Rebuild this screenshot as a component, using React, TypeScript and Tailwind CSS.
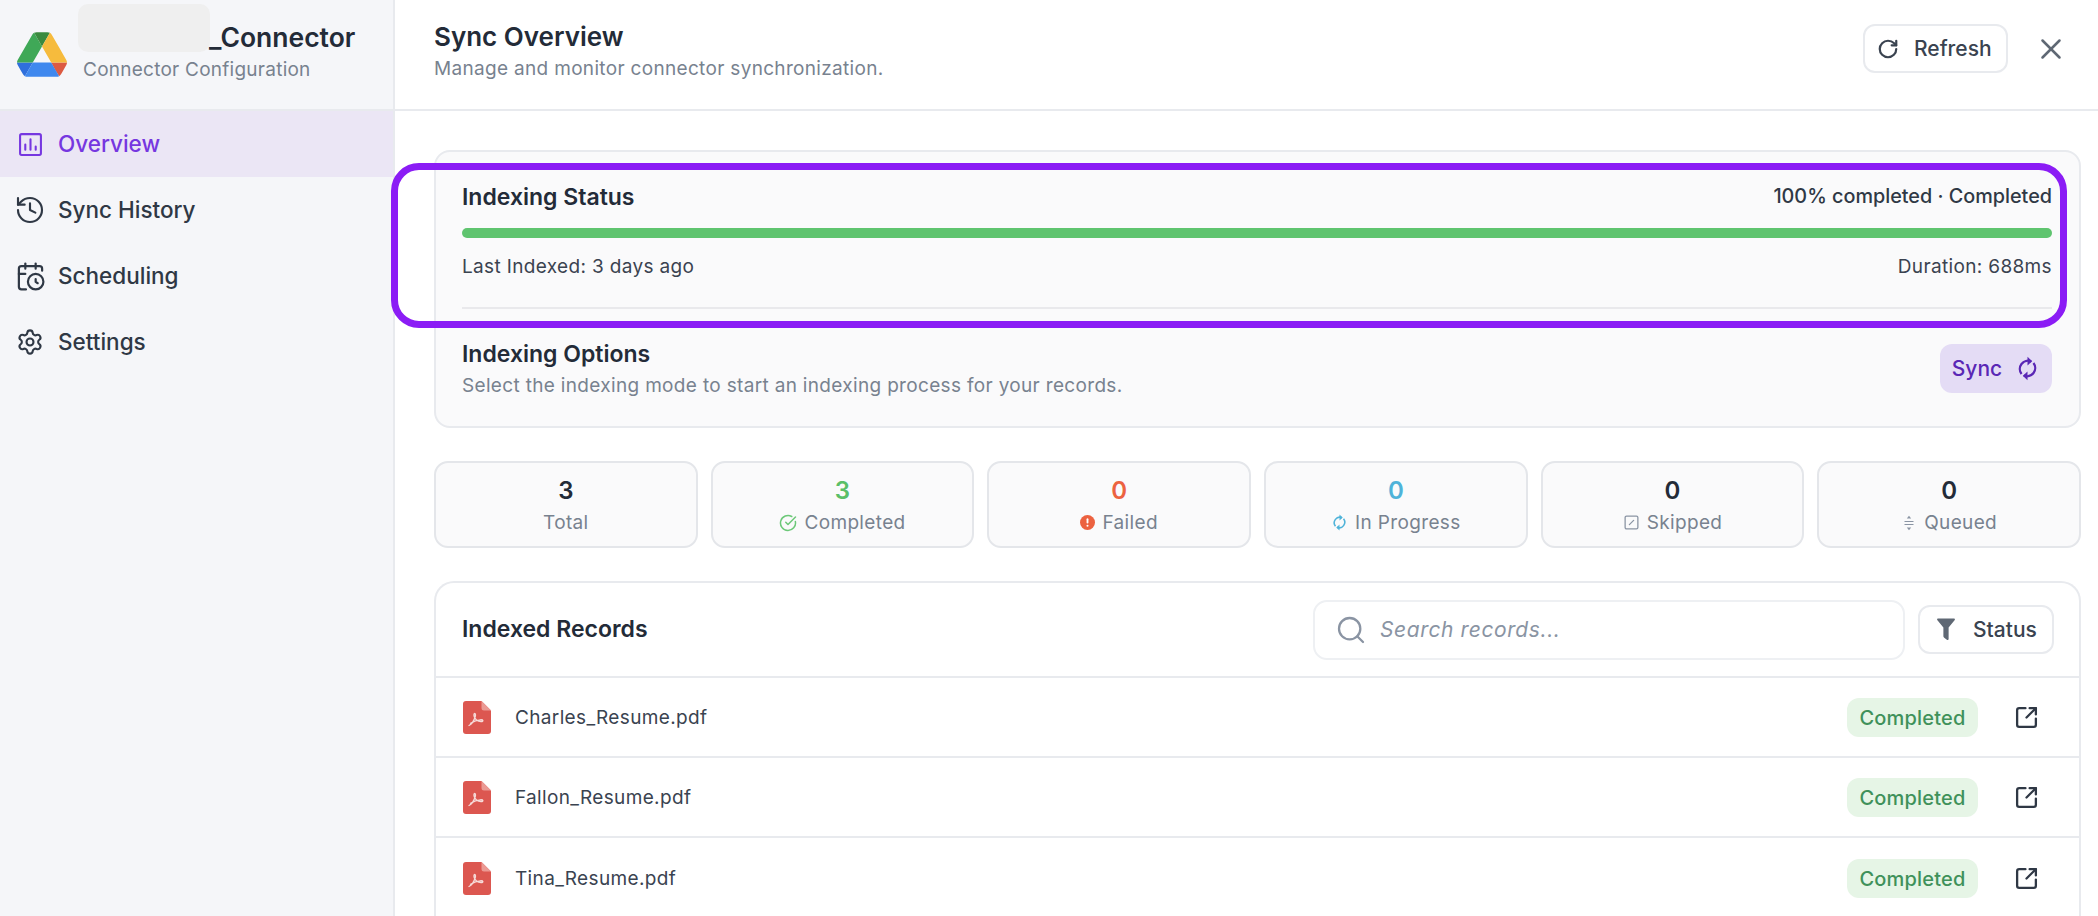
import React from 'react';
import {
  CalendarClock,
  CircleCheckBig,
  History,
  RotateCw,
  Search,
  Settings,
  SquareArrowOutUpRight,
  SquareSlash,
  X,
} from 'lucide-react';

const DriveLogo = () => (
  <svg viewBox="0 0 87.3 78" className="w-[50px] h-[45px] shrink-0">
    <path d="m6.6 66.85 3.85 6.65c.8 1.4 1.95 2.5 3.3 3.3l13.75-23.8h-27.5c0 1.55.4 3.1 1.2 4.5z" fill="#2f6fdc" />
    <path d="m43.65 25-13.75-23.8c-1.35.8-2.5 1.9-3.3 3.3l-25.4 44a9.06 9.06 0 0 0 -1.2 4.5h27.5z" fill="#3fa857" />
    <path d="m73.55 76.8c1.35-.8 2.5-1.9 3.3-3.3l1.6-2.75 7.65-13.25c.8-1.4 1.2-2.95 1.2-4.5h-27.502l5.852 11.5z" fill="#dc5a42" />
    <path d="m43.65 25 13.75-23.8c-1.35-.8-2.9-1.2-4.5-1.2h-18.5c-1.6 0-3.15.45-4.5 1.2z" fill="#3a8a3f" />
    <path d="m59.8 53h-32.3l-13.75 23.8c1.35.8 2.9 1.2 4.5 1.2h50.8c1.6 0 3.15-.45 4.5-1.2z" fill="#3f88ee" />
    <path d="m73.4 26.5-12.7-22c-.8-1.4-1.95-2.5-3.3-3.3l-13.75 23.8 16.15 28h27.45c0-1.55-.4-3.1-1.2-4.5z" fill="#f6bb3d" />
  </svg>
);

const OverviewIcon = () => (
  <svg viewBox="0 0 24 24" fill="none" stroke="currentColor" strokeWidth={2} className="w-[25px] h-[25px] shrink-0">
    <rect x="2" y="2" width="20" height="20" rx="1.5" />
    <path d="M7 12v5M12 7v10M17 14v3" strokeLinecap="round" />
  </svg>
);

const SyncIcon = ({ className }: { className: string }) => (
  <svg viewBox="0 0 24 24" fill="none" stroke="currentColor" strokeWidth={2.2} className={className}>
    <path d="M15.5 5.2A7.8 7.8 0 0 0 6.3 17.2" />
    <path d="M8.5 18.8A7.8 7.8 0 0 0 17.7 6.8" />
    <path d="M12 .8 16.5 5 12 9.2z" fill="currentColor" stroke="none" />
    <path d="M12 23.2 7.5 19 12 14.8z" fill="currentColor" stroke="none" />
  </svg>
);

const FailedIcon = () => (
  <svg viewBox="0 0 16 16" className="w-[15px] h-[15px] shrink-0">
    <circle cx="8" cy="8" r="8" fill="#ec6240" />
    <rect x="7" y="3.5" width="2" height="5.5" rx="1" fill="#fff" />
    <circle cx="8" cy="11.5" r="1.1" fill="#fff" />
  </svg>
);

const QueuedIcon = () => (
  <svg viewBox="0 0 16 16" fill="none" stroke="currentColor" strokeWidth={1.2} className="w-[16px] h-[16px] shrink-0 text-[#8a94a3]">
    <path d="M3.5 6.5h9M3.5 9.5h9" />
    <path d="M8 .8 5.8 3.6h4.4zM8 15.2l-2.2-2.8h4.4z" fill="currentColor" stroke="none" />
  </svg>
);

const FunnelIcon = () => (
  <svg viewBox="0 0 18 22" className="w-[20px] h-[23px] shrink-0">
    <path d="M.5 1.5C.5.9.9.5 1.5.5h15c.6 0 1 .4 1 1 0 .3-.1.5-.3.7L11.5 9v11c0 .9-1 1.4-1.7.9l-2.5-2c-.5-.3-.8-.8-.8-1.4V9L.8 2.2C.6 2 .5 1.8.5 1.5z" fill="#5f6874" />
  </svg>
);

const PdfIcon = () => (
  <svg viewBox="0 0 28 33" className="w-[28px] h-[33px] shrink-0">
    <path d="M3 0h15.5L28 9.5V30a3 3 0 0 1-3 3H3a3 3 0 0 1-3-3V3a3 3 0 0 1 3-3z" fill="#dc5750" />
    <path d="M18.5 0 28 9.5h-7a2.5 2.5 0 0 1-2.5-2.5z" fill="#eb9a94" />
    <path
      d="M6 24.5c2.5-1.2 5-5 6.2-8.8.5-1.6.3-3.2-.5-3.2-.9 0-.9 1.7-.4 3.2 1 2.8 3 4.6 6.7 4.8 1.2.1 2-.3 1.9-.9-.1-.7-1.2-.9-2.6-.8-3.2.2-6.8 1.6-9.8 3.4"
      fill="none"
      stroke="#f6dcda"
      strokeWidth={1.3}
      strokeLinecap="round"
    />
  </svg>
);

const navItems = [
  { label: 'Overview', icon: <OverviewIcon />, active: true },
  { label: 'Sync History', icon: <History className="w-[32px] h-[32px] shrink-0" strokeWidth={1.6} />, active: false },
  { label: 'Scheduling', icon: <CalendarClock className="w-[31px] h-[31px] shrink-0" strokeWidth={1.7} />, active: false },
  { label: 'Settings', icon: <Settings className="w-[28px] h-[28px] shrink-0" strokeWidth={1.8} />, active: false },
];

const stats = [
  { value: '3', label: 'Total', color: 'text-[#232b38]', icon: null },
  { value: '3', label: 'Completed', color: 'text-[#5bbf68]', icon: <CircleCheckBig className="w-[18px] h-[18px] shrink-0 text-[#6cc878]" strokeWidth={2} /> },
  { value: '0', label: 'Failed', color: 'text-[#ec6240]', icon: <FailedIcon /> },
  { value: '0', label: 'In Progress', color: 'text-[#4fb3d9]', icon: <SyncIcon className="w-[17px] h-[17px] shrink-0 text-[#4fb3d9]" /> },
  { value: '0', label: 'Skipped', color: 'text-[#232b38]', icon: <SquareSlash className="w-[17px] h-[17px] shrink-0 text-[#8a94a3]" strokeWidth={1.8} /> },
  { value: '0', label: 'Queued', color: 'text-[#232b38]', icon: <QueuedIcon /> },
];

const records = ['Charles_Resume.pdf', 'Fallon_Resume.pdf', 'Tina_Resume.pdf'];

export default function App() {
  return (
    <div className="flex h-[916px] w-[2098px] overflow-hidden bg-white text-[#232b38] font-['Inter',sans-serif]">
      <aside className="w-[395px] shrink-0 bg-[#f5f6f9] border-r-2 border-[#e8eaee]">
        <div className="relative flex items-center h-[111px] pl-[17px] gap-[16px] border-b-2 border-[#e8eaee]">
          <DriveLogo />
          <div className="flex flex-col gap-[2px] -mt-[7px]">
            <div className="pl-[126px] text-[26.5px] leading-[36px] font-semibold">_Connector</div>
            <div className="text-[19px] leading-[26px] tracking-[0.25px] text-[#78828f]">Connector Configuration</div>
          </div>
          <div className="absolute left-[78px] top-[4px] w-[132px] h-[48px] rounded-[10px] bg-[#efefef]"></div>
        </div>
        <nav className="flex flex-col">
          {navItems.map((item) => (
            <div
              key={item.label}
              className={`flex items-center h-[66px] pl-[17px] gap-[15px] text-[22.5px] font-medium ${item.active ? 'bg-[#ebe6f5] text-[#7637e0]' : 'text-[#2f3845]'}`}
            >
              <span className="flex items-center justify-center w-[26px] h-[26px]">{item.icon}</span>
              <span>{item.label}</span>
            </div>
          ))}
        </nav>
      </aside>

      <main className="relative flex-1 min-w-0 flex flex-col">
        <header className="flex items-center justify-between h-[111px] shrink-0 pl-[39px] pr-[30px] border-b-2 border-[#e8eaee]">
          <div className="-mt-[9px]">
            <div className="text-[26px] leading-[36px] font-semibold">Sync Overview</div>
            <div className="mt-[1px] text-[19px] leading-[26px] tracking-[0.32px] text-[#78828f]">Manage and monitor connector synchronization.</div>
          </div>
          <div className="flex items-center gap-[26px] -mt-[12px]">
            <button className="flex items-center gap-[15px] h-[49px] w-[145px] pl-[12px] rounded-[12px] border-2 border-[#e8eaee] text-[21px] font-medium text-[#3a4350]">
              <RotateCw className="w-[22px] h-[22px]" strokeWidth={2.4} />
              Refresh
            </button>
            <X className="w-[34px] h-[34px] text-[#5f6874]" strokeWidth={1.8} />
          </div>
        </header>

        <div className="flex flex-col gap-[33px] pl-[39px] pr-[17px] pt-[39px]">
          <section className="rounded-[16px] border-2 border-[#e8eaee] bg-[#fafafb] pl-[26px] pr-[27px] h-[278px]">
            <div className="flex items-center justify-between pt-[30px] h-[76px] pb-[16px]">
              <span className="text-[23px] font-semibold">Indexing Status</span>
              <span className="text-[19.8px] font-medium text-[#2f3845]">100% completed · Completed</span>
            </div>
            <div className="h-[10px] rounded-full bg-[#5fc46f]"></div>
            <div className="flex items-center justify-between h-[58px] text-[19px] tracking-[0.35px] text-[#3a4350]">
              <span>Last Indexed: 3 days ago</span>
              <span>Duration: 688ms</span>
            </div>
            <div className="h-[2px] mt-[11px] bg-[#e9e9ec]"></div>
            <div className="flex items-center justify-between mt-[29px]">
              <div>
                <div className="text-[23px] leading-[32px] font-semibold">Indexing Options</div>
                <div className="mt-[3px] text-[19px] leading-[26px] tracking-[0.33px] text-[#78828f]">Select the indexing mode to start an indexing process for your records.</div>
              </div>
              <button className="flex items-center justify-center gap-[13px] w-[112px] h-[49px] rounded-[12px] bg-[#e4dcf5] text-[#5a27b5] text-[21px] font-medium">
                Sync
                <SyncIcon className="w-[25px] h-[25px]" />
              </button>
            </div>
          </section>

          <section className="grid grid-cols-6 gap-[13px]">
            {stats.map((stat) => (
              <div key={stat.label} className="flex flex-col items-center justify-center h-[87px] rounded-[14px] border-2 border-[#e4e6ea] bg-[#fafafb]">
                <div className={`text-[24px] leading-[34px] font-semibold ${stat.color}`}>{stat.value}</div>
                <div className="flex items-center gap-[7px] mt-[2px] text-[19px] tracking-[0.35px] leading-[26px] text-[#78828f]">
                  {stat.icon}
                  <span>{stat.label}</span>
                </div>
              </div>
            ))}
          </section>

          <section className="rounded-t-[20px] border-2 border-b-0 border-[#e8eaee]">
            <div className="flex items-center h-[95px] pl-[26px] pr-[25px] border-b-2 border-[#e8eaee]">
              <span className="text-[23px] font-semibold">Indexed Records</span>
              <div className="ml-auto flex items-center gap-[13px]">
                <div className="flex items-center w-[592px] h-[60px] pl-[20px] gap-[13px] rounded-[14px] border-2 border-[#eef0f3]">
                  <Search className="w-[32px] h-[32px] text-[#8a94a3]" strokeWidth={1.7} />
                  <span className="text-[21px] italic tracking-[0.6px] text-[#8a94a3]">Search records...</span>
                </div>
                <button className="flex items-center gap-[17px] w-[136px] h-[49px] pl-[16px] rounded-[12px] border-2 border-[#e8eaee] text-[21px] font-medium text-[#3a4350]">
                  <FunnelIcon />
                  Status
                </button>
              </div>
            </div>
            {records.map((name) => (
              <div key={name} className="flex items-center h-[80px] pl-[27px] pr-[40px] border-b-2 border-[#e8eaee] last:border-b-0">
                <PdfIcon />
                <span className="ml-[24px] mt-[2px] text-[19px] tracking-[0.35px] text-[#3a4350]">{name}</span>
                <span className="ml-auto mt-[1px] flex items-center justify-center w-[131px] h-[39px] rounded-[12px] bg-[#e6f5e6] text-[20px] tracking-[0.2px] font-medium text-[#3f915a]">Completed</span>
                <SquareArrowOutUpRight className="ml-[36px] w-[25px] h-[25px] text-[#2f3845]" strokeWidth={2.2} />
              </div>
            ))}
          </section>
        </div>

        <div className="absolute -left-[4px] top-[163px] w-[1676px] h-[165px] rounded-[28px] border-[7px] border-[#8b1cf5] pointer-events-none"></div>
      </main>
    </div>
  );
}
